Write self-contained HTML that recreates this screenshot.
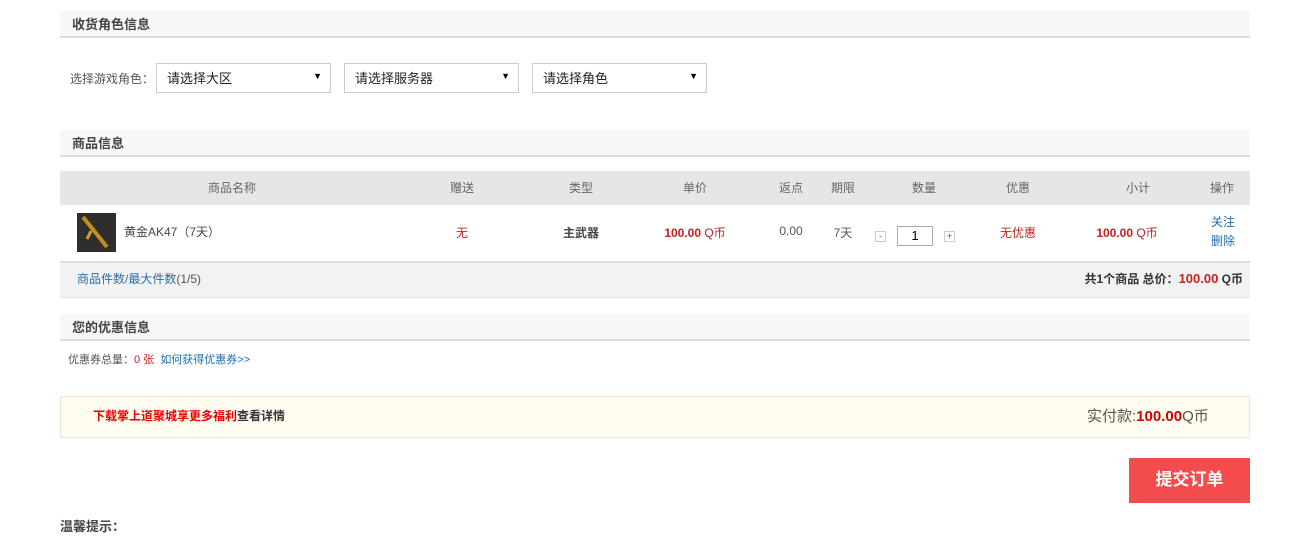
<!DOCTYPE html>
<html><head><meta charset="utf-8">
<style>
*{margin:0;padding:0;box-sizing:border-box}
body{width:1315px;height:536px;background:#fff;font-family:"Liberation Sans","Noto Sans CJK SC",sans-serif;color:#333;position:relative;overflow:hidden;font-size:12px}
.a{position:absolute;white-space:nowrap}
.bar{position:absolute;left:60px;width:1190px;height:27px;background:#f7f7f7;border-bottom:2px solid #ddd}
.bar span{position:absolute;left:12px;top:3px;font-size:13px;font-weight:bold;color:#444}
.sel{position:absolute;top:63px;width:175px;height:30px;border:1px solid #ccc;background:#fff}
.sel span{position:absolute;left:10px;top:4px;font-size:13px;color:#222}
.sel i{position:absolute;right:8px;top:7px;font-style:normal;font-size:9px;color:#000}
.th{position:absolute;top:179px;font-size:12px;color:#666;transform:translateX(-50%)}
.td{position:absolute;top:224px;font-size:12px;transform:translateX(-50%)}
.red{color:#c81e1e}
.blue{color:#1f6fb2}
</style></head><body>
<div class="bar" style="top:11px"><span>收货角色信息</span></div>
<div class="a" style="left:70px;top:70px;color:#555">选择游戏角色：</div>
<div class="sel" style="left:156px"><span>请选择大区</span><i>▼</i></div>
<div class="sel" style="left:344px"><span>请选择服务器</span><i>▼</i></div>
<div class="sel" style="left:532px"><span>请选择角色</span><i>▼</i></div>

<div class="bar" style="top:130px"><span>商品信息</span></div>
<div class="a" style="left:60px;top:171px;width:1190px;height:34px;background:#e6e6e6"></div>
<div class="th" style="left:232px">商品名称</div>
<div class="th" style="left:462px">赠送</div>
<div class="th" style="left:581px">类型</div>
<div class="th" style="left:695px">单价</div>
<div class="th" style="left:791px">返点</div>
<div class="th" style="left:843px">期限</div>
<div class="th" style="left:924px">数量</div>
<div class="th" style="left:1018px">优惠</div>
<div class="th" style="left:1138px">小计</div>
<div class="th" style="left:1222px">操作</div>

<svg class="a" style="left:77px;top:213px" width="39" height="39"><rect width="39" height="39" fill="#2e2e2e"/><path d="M6 4 L30 34" stroke="#c98a1c" stroke-width="4"/><path d="M14 18 L10 26" stroke="#d9a020" stroke-width="3"/></svg>
<div class="a" style="left:124px;top:223px;font-size:12px;color:#444">黄金AK47（7天）</div>
<div class="td red" style="left:462px">无</div>
<div class="td" style="left:581px;font-weight:bold;color:#444">主武器</div>
<div class="td red" style="left:695px"><b>100.00</b> Q币</div>
<div class="td" style="left:791px;color:#555">0.00</div>
<div class="td" style="left:843px;color:#555">7天</div>
<div class="a" style="left:875px;top:231px;width:11px;height:11px;border:1px solid #ccc;font-size:9px;line-height:9px;text-align:center;color:#555">-</div>
<div class="a" style="left:897px;top:226px;width:36px;height:20px;border:1px solid #aaa;font-size:13px;line-height:18px;text-align:center;color:#000">1</div>
<div class="a" style="left:944px;top:231px;width:11px;height:11px;border:1px solid #ccc;font-size:9px;line-height:9px;text-align:center;color:#555">+</div>
<div class="td red" style="left:1018px">无优惠</div>
<div class="td red" style="left:1127px"><b>100.00</b> Q币</div>
<div class="a blue" style="left:1211px;top:213px">关注</div>
<div class="a blue" style="left:1211px;top:232px">删除</div>

<div class="a" style="left:60px;top:261px;width:1190px;height:37px;background:#f2f2f2;border-top:2px solid #ddd;border-bottom:1px solid #e4e4e4"></div>
<div class="a" style="left:77px;top:270px"><span class="blue">商品件数/最大件数</span><span style="color:#555">(1/5)</span></div>
<div class="a" style="right:72px;top:270px;font-weight:bold;color:#333;font-size:12px">共1个商品 总价：<span class="red" style="font-size:13px">100.00</span> Q币</div>

<div class="bar" style="top:314px"><span>您的优惠信息</span></div>
<div class="a" style="left:68px;top:351px;color:#555;font-size:11px">优惠券总量：<span class="red">0 张</span>&nbsp;&nbsp;<span class="blue">如何获得优惠券&gt;&gt;</span></div>

<div class="a" style="left:60px;top:396px;width:1190px;height:42px;background:#fffdf0;border:1px solid #f0e2d8"></div>
<div class="a" style="left:93px;top:407px;font-size:12px;font-weight:bold"><span style="color:#e00">下载掌上道聚城享更多福利</span><span style="color:#333">查看详情</span></div>
<div class="a" style="left:1087px;top:405px;font-size:15px;color:#555">实付款:<b class="red" style="color:#d40000">100.00</b>Q币</div>

<div class="a" style="left:1129px;top:458px;width:121px;height:45px;background:#f44b4d;color:#fff;font-size:17px;font-weight:bold;text-align:center;line-height:43px">提交订单</div>
<div class="a" style="left:60px;top:516px;font-size:13px;font-weight:bold;color:#444">温馨提示：</div>
</body></html>
